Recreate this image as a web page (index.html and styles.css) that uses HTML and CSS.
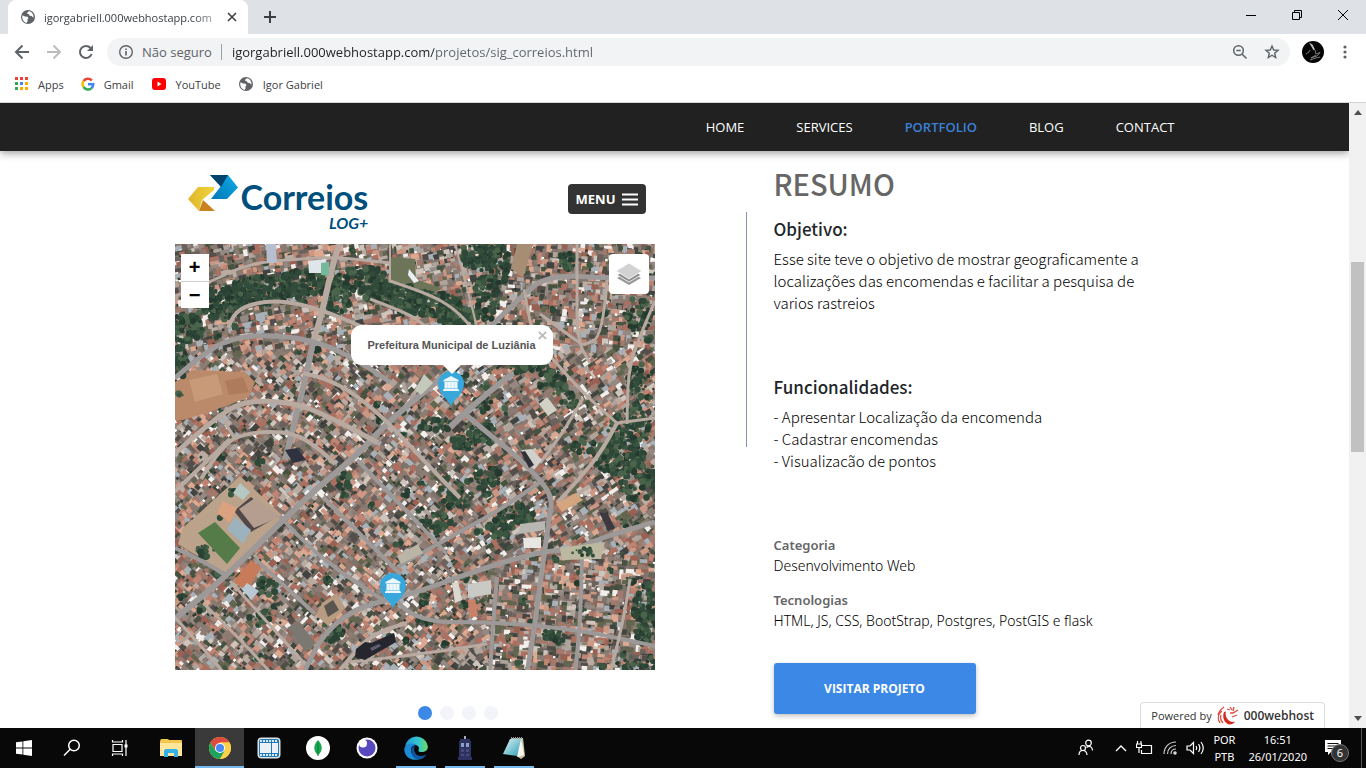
FILE: index.html
```html
<!DOCTYPE html>
<html lang="pt-BR">
<head>
<meta charset="utf-8">
<title>SIG Correios</title>
<link rel="stylesheet" href="styles.css">
</head>
<body>
<svg class="defs" width="0" height="0" aria-hidden="true">
  <defs>
    <symbol id="globe" viewBox="0 0 16 16"><circle cx="8" cy="8" r="7" fill="#5f6368"/><path d="M2.600 6.200 5 7.600l2.600 .2.8 1.600-1 1.200.2 2-1.200 1.400C3.800 13 2.200 10.800 2.200 8zM9 2.200 7.200 3.600 7.400 5 9 5.200l.6 1.600 2 .2 1.800 1.800c.6-3-1.200-6-4.400-6.600z" fill="#fff"/></symbol>
    <symbol id="pin" viewBox="0 0 28 36"><path d="M14 35C11 28 1 23 1 13a13 13 0 0 1 26 0c0 10-10 15-13 22z" fill="#37a7dc"/><path d="M14 5 6.500 9v1.500h15V9zM7.500 11h13v6h-13zM7 17.500h14v1h1V20H6v-1.500h1z" fill="#eef7fc"/><path d="M10.500 11.500V17M14 11.500V17M17.500 11.500V17" stroke="#b5dcf0" stroke-width=".6"/></symbol>
    <linearGradient id="gold" x1="0" x2="1"><stop offset="0" stop-color="#e0b52c"/><stop offset="1" stop-color="#f0d53a"/></linearGradient>
    <linearGradient id="sky" x1="0" y1="1" x2="1" y2="0"><stop offset="0" stop-color="#0077b6"/><stop offset="1" stop-color="#10abe8"/></linearGradient>
    <linearGradient id="edge" x1="0" y1="0" x2="1" y2="0"><stop offset="0" stop-color="#1f9bdc"/><stop offset=".6" stop-color="#35c6cf"/><stop offset="1" stop-color="#6bdc5c"/></linearGradient>
    <linearGradient id="paper" x1="0" y1="0" x2="1" y2="1"><stop offset="0" stop-color="#dff4f7"/><stop offset="1" stop-color="#2f9fb4"/></linearGradient>
  </defs>
</svg>

<header class="chrome">
  <div class="tabs">
    <div class="tab">
      <svg class="i16"><use href="#globe"/></svg>
      <span class="tab-title">igorgabriell.000webhostapp.com</span>
      <button class="bare" aria-label="Fechar guia"><svg width="10" height="10" viewBox="0 0 10 10"><path d="M1 1l8 8M9 1 1 9" stroke="#3c4043" stroke-width="1.600"/></svg></button>
    </div>
    <button class="bare new-tab" aria-label="Nova guia"><svg width="12" height="12" viewBox="0 0 12 12"><path d="M6 0v12M0 6h12" stroke="#3c4043" stroke-width="2"/></svg></button>
    <div class="window-controls">
      <button class="bare" aria-label="Minimizar"><svg width="12" height="12"><path d="M1 6.500h10" stroke="#000"/></svg></button>
      <button class="bare" aria-label="Restaurar"><svg width="12" height="12" fill="none" stroke="#000"><path d="M1.500 3.500h7v7h-7zM3.500 3V1.500h7v7H9"/></svg></button>
      <button class="bare" aria-label="Fechar"><svg width="12" height="12"><path d="M1 1l10 10M11 1 1 11" stroke="#000"/></svg></button>
    </div>
  </div>
  <div class="toolbar">
    <button class="bare tool" aria-label="Voltar"><svg width="16" height="16" fill="none" stroke="#5f6368" stroke-width="2"><path d="M15 8H2M8.500 1.500 2 8l6.500 6.500"/></svg></button>
    <button class="bare tool" aria-label="Avançar"><svg width="16" height="16" fill="none" stroke="#babcbe" stroke-width="2"><path d="M1 8h13M7.500 1.500 14 8l-6.500 6.500"/></svg></button>
    <button class="bare tool" aria-label="Recarregar"><svg width="16" height="16"><path d="M13.600 10A6 6 0 1 1 12.500 4" fill="none" stroke="#5f6368" stroke-width="2"/><path d="M15 1v6H9z" fill="#5f6368"/></svg></button>
    <div class="address">
      <svg width="16" height="16"><circle cx="8" cy="8" r="6.300" fill="none" stroke="#5f6368" stroke-width="1.400"/><path d="M7.200 7h1.600v4.500H7.200zM7.200 4.400h1.600V6H7.200z" fill="#5f6368"/></svg>
      <span class="insecure">Não seguro</span>
      <input class="url" aria-label="Endereço" value="igorgabriell.000webhostapp.com/projetos/sig_correios.html">
      <button class="bare" aria-label="Zoom"><svg width="16" height="16" fill="none" stroke="#5f6368" stroke-width="1.500"><circle cx="6.500" cy="6.500" r="4.800"/><path d="M10 10l4.500 4.500M4.300 6.500h4.400"/></svg></button>
      <button class="bare star" aria-label="Favoritar"><svg width="16" height="16" fill="none" stroke="#5f6368" stroke-width="1.400"><path d="M8 2l1.700 4 4.300.4-3.300 2.800 1 4.300L8 11.200l-3.700 2.300 1-4.300L2 6.400 6.300 6z"/></svg></button>
    </div>
    <button class="bare" aria-label="Perfil"><svg width="22" height="22"><circle cx="11" cy="11" r="11" fill="#050505"/><path d="M7 1.500l3.500 2 2.500 5-1.500.8z" fill="#bbb"/><path d="M13 9l1 4 4-1.500-3 3.500-6 2 5-3M4 13l3-2 1-2M8 19l6-2 4-1" fill="none" stroke="#888" stroke-width=".9"/></svg></button>
    <button class="bare more" aria-label="Menu do navegador"><svg width="4" height="16" fill="#5f6368"><circle cx="2" cy="3" r="1.600"/><circle cx="2" cy="8" r="1.600"/><circle cx="2" cy="13" r="1.600"/></svg></button>
  </div>
  <nav class="bookmarks" aria-label="Favoritos">
    <a href="#"><svg width="14" height="14"><g fill="#ea4335"><path d="M0 0h3v3H0zM5 0h3v3H5zM10 0h3v3h-3z"/></g><path d="M0 5h3v3H0zM0 10h3v3H0z" fill="#34a853"/><path d="M5 5h3v3H5z" fill="#4285f4"/><path d="M5 10h3v3H5zM10 5h3v3h-3zM10 10h3v3h-3z" fill="#f9ab00"/></svg>Apps</a>
    <a href="#"><svg width="14" height="14" fill="none" stroke-width="2.500"><path d="M2.600 4A5.200 5.200 0 0 1 10.800 3.400" stroke="#ea4335"/><path d="M2.600 4a5.200 5.200 0 0 0 0 6" stroke="#fbbc05"/><path d="M2.600 10a5.200 5.200 0 0 0 7.800 1.200" stroke="#34a853"/><path d="M10.400 11.200A5 5 0 0 0 12.200 7.200H7" stroke="#4285f4"/></svg>Gmail</a>
    <a href="#"><svg width="16" height="14"><rect x="1" y="1" width="14" height="12" rx="3" fill="#f00"/><path d="M6.500 4.500v5l4-2.500z" fill="#fff"/></svg>YouTube</a>
    <a href="#"><svg class="i16"><use href="#globe"/></svg>Igor Gabriel</a>
  </nav>
</header>

<div class="viewport">
  <div class="page">
    <nav class="site-nav" aria-label="Site">
      <ul class="container">
        <li><a href="#">HOME</a></li>
        <li><a href="#">SERVICES</a></li>
        <li><a href="#" class="active">PORTFOLIO</a></li>
        <li><a href="#">BLOG</a></li>
        <li><a href="#">CONTACT</a></li>
      </ul>
    </nav>
    <main class="container project">
      <section class="gallery" aria-label="Imagens do projeto">
        <div class="slide">
          <div class="slide-head">
            <div class="brand">
              <svg width="52" height="38" viewBox="0 0 52 38"><path d="M41 1l10 12.500L40 25H24l10-13-11-11z" fill="url(#sky)"/><path d="M23 1 34 13 41 1z" fill="#00456e"/><path d="M11 13h16v3L15 26l-3 11L1 25z" fill="url(#gold)"/><path d="M16 26 28 37H12z" fill="#c8821f"/></svg>
              <div class="brand-name">Correios<em>LOG+</em></div>
            </div>
            <button class="menu-btn">MENU<svg width="16" height="13"><path d="M0 1.500h16M0 6.500h16M0 11.500h16" stroke="#fff" stroke-width="1.800"/></svg></button>
          </div>
          <div class="map">
            <canvas id="satellite" width="480" height="426" role="img" aria-label="Imagem de satélite de Luziânia"></canvas>
            <div class="zoom"><button aria-label="Aproximar">+</button><button aria-label="Afastar">−</button></div>
            <button class="layers" aria-label="Camadas"><svg width="26" height="26"><path d="M13 10 25 17 13 24 1 17z" fill="#999"/><path d="M13 7 25 14 13 21 1 14z" fill="#8c8c8c" stroke="#fff" stroke-width=".8"/><path d="M13 2 26 10 13 18 0 10z" fill="#d2d2d2" stroke="#fff" stroke-width=".8"/></svg></button>
            <svg class="marker marker-a"><use href="#pin"/></svg>
            <svg class="marker marker-b"><use href="#pin"/></svg>
            <div class="popup">Prefeitura Municipal de Luziânia<button class="popup-close" aria-label="Fechar">×</button></div>
          </div>
        </div>
        <div class="dots">
          <button class="dot on" aria-label="Slide 1"></button><button class="dot" aria-label="Slide 2"></button><button class="dot" aria-label="Slide 3"></button><button class="dot" aria-label="Slide 4"></button>
        </div>
      </section>
      <div class="rule"></div>
      <article class="summary">
        <h1>RESUMO</h1>
        <section class="block">
          <h2>Objetivo:</h2>
          <p>Esse site teve o objetivo de mostrar geograficamente a localizações das encomendas e facilitar a pesquisa de varios rastreios</p>
        </section>
        <section class="block">
          <h2>Funcionalidades:</h2>
          <p>- Apresentar Localização da encomenda<br>- Cadastrar encomendas<br>- Visualizacão de pontos</p>
        </section>
        <dl>
          <dt>Categoria</dt><dd>Desenvolvimento Web</dd>
          <dt>Tecnologias</dt><dd>HTML, JS, CSS, BootStrap, Postgres, PostGIS e flask</dd>
        </dl>
        <a class="visit" href="#">VISITAR PROJETO</a>
      </article>
    </main>
    <a class="powered" href="#">Powered by<svg width="22" height="20" viewBox="0 0 22 20"><path d="M7 6C5 11 7 17 12 18.500c3 0 5-1 6-3-3 1-6 0-8-3-1-2-2-4-1-7z" fill="#d7281d"/><path d="M5 5C0 9 1 14 3 17M7 1C4 3 2 5 1 9M10 3l3 1M13 1l2 3M17 1l-1 4M21 4l-5 3-3 0M20 9l-5 2M4 9c-1 3 0 6 2 8" fill="none" stroke="#e04a3f" stroke-width="1.300"/></svg><b>000webhost</b></a>
  </div>
  <div class="scrollbar" aria-hidden="true"><svg width="8" height="5"><path d="M0 5 4 0l4 5z" fill="#505050"/></svg><div class="thumb"></div><svg width="8" height="5"><path d="M0 0h8L4 5z" fill="#505050"/></svg></div>
</div>

<footer class="taskbar">
  <button class="system" aria-label="Iniciar"><svg width="16" height="16" fill="#fff"><path d="M0 2.300 6.500 1.400v6.200H0zM7.300 1.300 16 0v7.600H7.300zM0 8.400h6.500v6.200L0 13.700zM7.300 8.400H16V16l-8.700-1.300z"/></svg></button>
  <button class="system" aria-label="Pesquisar"><svg width="18" height="18" fill="none" stroke="#fff" stroke-width="1.500"><circle cx="11" cy="6.500" r="5.300"/><path d="M7.200 10.300 1 16.500"/></svg></button>
  <button class="system" aria-label="Visão de tarefas"><svg width="18" height="18" fill="none" stroke="#fff" stroke-width="1.200"><path d="M2 5.500h9v7H2zM1.500 1v2H11.500V1M1.500 17v-2H11.500v2M15 1v16"/><path d="M13.500 5.500h3v3h-3z" fill="#fff" stroke="none"/></svg></button>
  <div class="apps">
  <button aria-label="Explorador"><svg width="22" height="20"><path d="M0 3l1-2h7l1 1h12a1 1 0 0 1 1 1v15H0z" fill="#f3c74c"/><path d="M0 5h22v13H0z" fill="#ffe69a"/><path d="M4 19v-6.500l1.500-1.500h11l1.500 1.500V19h-4v-4H8v4z" fill="#35b1e8"/></svg></button>
  <button class="current" aria-label="Chrome"><svg width="24" height="24"><circle cx="12" cy="12" r="11" fill="#fbd04b"/><path d="M2.500 6.500A11 11 0 0 1 21.500 6.500H12L7.200 14.700z" fill="#de4b3e"/><path d="M2.500 6.500 7.200 14.700 16.800 14.700 12 23A11 11 0 0 1 2.500 6.500z" fill="#1da35b"/><path d="M21.500 6.500H12L16.800 14.700 12 23A11 11 0 0 0 21.500 6.500z" fill="#fbd04b"/><circle cx="12" cy="12" r="5" fill="#fff"/><circle cx="12" cy="12" r="4" fill="#4788f4"/></svg></button>
  <button aria-label="Vídeos"><svg width="24" height="22"><rect x=".5" y=".5" width="23" height="21" rx="4" fill="#dfe4e8"/><rect x="2" y="2" width="20" height="18" rx="2" fill="#2678b5"/><path d="M3 6h11v10H3zM15 6h6v10h-6z" fill="#eaf1f6"/><path d="M3 4h18M3 18h18" stroke="#d6ecf8" stroke-width="2" stroke-dasharray="2 1"/></svg></button>
  <button aria-label="MongoDB"><svg width="24" height="24"><circle cx="12" cy="12" r="12" fill="#fff"/><path d="M12 4c5 5 5 11 0 15-5-4-5-10 0-15z" fill="#19a84f"/><path d="M12 7v13" stroke="#0b7d37"/></svg></button>
  <button aria-label="Insomnia"><svg width="22" height="22"><circle cx="11" cy="11" r="10.500" fill="#fff"/><circle cx="11" cy="11" r="8.500" fill="#5849be"/><circle cx="7" cy="6.500" r="4" fill="#fff"/></svg></button>
  <button class="open" aria-label="Edge"><svg width="24" height="24"><path d="M1 11A11.500 11.500 0 0 1 23.800 10c.4 4-2.500 6-6 6-2.300 0-3.800-1-3.300-2 .8-1 .8-4-2.500-5C8 7.500 3 8 1 11z" fill="url(#edge)"/><path d="M.3 13C1 8 8 6 12 9c-4 0-6 4-4.500 8 1 3 4 5.500 8 6C8 26 0 20.500.3 13z" fill="#1a8bd4"/><path d="M12 9c-3 2-3 10 4 11 3 .3 5-1 6.500-1.500-1.500 3-5 5-8 5C6 22 5 11 12 9z" fill="#0d57a5"/></svg></button>
  <button class="open" aria-label="Tardis"><svg width="16" height="24"><path d="M2 5h12v17H2zM1 21h14v3H1zM3 3h10v2H3z" fill="#2d3260"/><path d="M7 0h2v3H7z" fill="#aab"/><path d="M4 7h3v4H4zM9 7h3v4H9z" fill="#8aa0c8"/><path d="M4 13h3v3H4zM9 13h3v3H9zM4 18h3v2H4zM9 18h3v2H9z" fill="#454b80"/></svg></button>
  <button class="open" aria-label="Bloco de notas"><svg width="24" height="22"><path d="M9 1h12l2 18-4 3-3-2z" fill="#c9c5a8"/><path d="M19 1l3 17-7 2z" fill="#f6f6f2"/><path d="M8 2h11l-4 17-14-2z" fill="url(#paper)"/><path d="M9 1h12" stroke="#999" stroke-width="2" stroke-dasharray="1 1"/></svg></button>
  </div>
  <div class="tray">
    <svg width="16" height="18" fill="none" stroke="#fff" stroke-width="1.200"><circle cx="10.500" cy="4" r="2.800"/><circle cx="5" cy="9" r="2.500"/><path d="M1 16c0-6 7.500-6 8 0M8.500 8.500c3-2.500 6-.5 6 3"/></svg>
    <svg width="12" height="8" fill="none" stroke="#fff" stroke-width="1.400"><path d="M1 7l5-5 5 5"/></svg>
    <svg width="18" height="14" fill="none" stroke="#fff" stroke-width="1.200"><path d="M6 4.500h9.500v8h-10V9M1.500 0v3M5 0v3M.5 3h5v3.500h-5zM3 6.500V12"/></svg>
    <svg width="14" height="14" fill="none" stroke="#ccc" stroke-width="1.200"><path d="M1 13C1 6 6 1 13 1M4.500 13C4.500 8 8 4.500 13 4.500M8 13c0-3 2-5 5-5"/><circle cx="12" cy="12" r="1.200" fill="#fff"/></svg>
    <svg width="18" height="14" fill="none" stroke="#fff" stroke-width="1.200"><path d="M1 5h3l3.500-3.500v11L4 9H1zM10 5c1 1.500 1 2.500 0 4M12.500 3c2 3 2 5 0 8M15 1c3 4 3 8 0 12"/></svg>
    <div class="stack">POR<br>PTB</div>
    <div class="stack clock">16:51<br>26/01/2020</div>
    <div class="notices"><svg width="18" height="18"><path d="M1 1h16v12H7l-3 3v-3H1z" fill="#fff"/><path d="M3.500 4.500h11M3.500 7h11M3.500 9.500h7" stroke="#111" stroke-width="1.200"/></svg><span class="count">6</span></div>
  </div>
</footer>
<script src="map.js"></script>
</body>
</html>
```

FILE: styles.css
```css
* { box-sizing: border-box; }
body { margin: 0; height: 100vh; display: flex; flex-direction: column; overflow: hidden; background: #fff; color: #212529; font-family: "Noto Sans", "Open Sans", sans-serif; font-size: 12px; }
a { color: inherit; text-decoration: none; }
svg { display: block; flex: none; }
button, input { font: inherit; border: 0; padding: 0; margin: 0; background: none; color: inherit; }
.defs { position: absolute; }
.bare { display: flex; align-items: center; justify-content: center; }
.i16 { width: 16px; height: 16px; }

.chrome { border-bottom: 1px solid #d3d5d8; color: #3c4043; font-family: "Open Sans", sans-serif; }
.tabs { height: 34px; background: #dee1e6; display: flex; padding-left: 8px; }
.tab { width: 240px; background: #fff; border-radius: 8px 8px 0 0; display: flex; align-items: center; gap: 8px; padding: 0 11px 0 12px; }
.tab-title { flex: 1; white-space: nowrap; font-size: 11px; mask-image: linear-gradient(to right, #000 85%, rgba(0, 0, 0, .3)); }
.new-tab { padding: 0 16px; }
.window-controls { margin-left: auto; display: flex; }
.window-controls button { width: 46px; height: 29px; }
.toolbar { height: 36px; display: flex; align-items: center; padding: 0 19px 0 6px; }
.tool { width: 32px; }
.address { flex: 1; height: 28px; margin: 0 12px 0 5px; border-radius: 14px; background: #f1f3f4; display: flex; align-items: center; padding: 0 10px 0 11px; font-size: 13px; }
.insecure { color: #5f6368; padding: 0 9px 0 8px; margin-right: 10px; border-right: 1px solid #9aa0a6; line-height: 16px; }
.url { flex: 1; background: linear-gradient(to right, #202124 202px, #5f6368 202px); background-clip: text; -webkit-background-clip: text; color: transparent; }
.star { margin-left: 16px; }
.more { margin-left: 19px; }
.bookmarks { height: 32px; display: flex; align-items: center; gap: 17px; padding: 0 15px 4px; font-size: 11px; }
.bookmarks a { display: flex; align-items: center; gap: 9px; }

.viewport { flex: 1; min-height: 0; display: flex; }
.page { flex: 1; position: relative; overflow: hidden; }
.scrollbar { width: 17px; background: #f1f1f1; display: flex; flex-direction: column; align-items: center; padding: 7px 0; }
.thumb { width: 13px; height: 190px; margin: 147px 0 auto; background: #c1c1c1; }
.container { width: 1000px; max-width: 100%; margin: 0 auto; }

.site-nav { background: #212121; box-shadow: 0 2px 8px rgba(0, 0, 0, .4); color: #fff; position: relative; }
.site-nav ul { display: flex; justify-content: flex-end; gap: 52px; padding: 0; list-style: none; font: 500 13px/48px "Open Sans", sans-serif; }
.site-nav .active { color: #3b80d8; font-weight: 600; }

.project { display: flex; }
.gallery { width: 566px; margin-right: 5px; }
.slide { width: 480px; max-width: 100%; }
.slide-head { height: 93px; display: flex; align-items: center; justify-content: space-between; padding: 3px 9px 0 12px; }
.brand { display: flex; gap: 2px; padding-top: 4px; color: #004f7c; }
.brand svg { margin-top: 1px; }
.brand-name { font: 700 34px/48px Lato, sans-serif; display: flex; flex-direction: column; padding-bottom: 4px; }
.brand-name em { align-self: flex-end; font: italic 700 16px/4px Lato, sans-serif; }
.menu-btn { display: flex; align-items: center; gap: 6px; height: 30px; padding: 0 8px; border-radius: 4px; background: #333; color: #fff; font: 700 13px/30px "Open Sans", sans-serif; }
.map { position: relative; }
.map canvas { display: block; width: 100%; }
.zoom { position: absolute; left: 6px; top: 10px; width: 28px; background: #fff; }
.zoom button { display: block; width: 100%; height: 27px; font: 700 20px/27px "Liberation Sans", sans-serif; color: #000; }
.zoom button + button { border-top: 1px solid #ccc; }
.layers { position: absolute; right: 6px; top: 10px; width: 40px; height: 40px; border-radius: 4px; background: #fff; display: flex; align-items: center; justify-content: center; }
.marker { position: absolute; width: 28px; height: 36px; }
.marker-a { left: 262px; top: 127px; }
.marker-b { left: 204px; top: 329px; }
.popup { position: absolute; left: 176px; top: 81px; width: 202px; height: 40px; border-radius: 11px; background: #fff; color: #555; text-align: center; white-space: nowrap; font: 700 11px/40px "Liberation Sans", sans-serif; }
.popup::after { content: ""; position: absolute; left: 92px; top: 100%; border: 9px solid transparent; border-top-color: #fff; border-bottom: 0; }
.popup-close { position: absolute; right: 5px; top: 1px; font: 700 17px/20px "Liberation Sans", sans-serif; color: #bbb; }
.dots { display: flex; justify-content: center; gap: 8px; margin-top: 36px; }
.dot { width: 14px; height: 14px; border-radius: 50%; background: #f2f4f9; }
.dot.on { background: #3c88e6; }

.rule { width: 1px; height: 235px; margin: 61px 27px 0 0; background: #8791b5; }
.summary { flex: 1; font-family: "Noto Sans CJK SC", sans-serif; }
.summary h1 { margin: 10px 0 13px; font-size: 29px; line-height: 44px; font-weight: 500; color: #666; }
.summary h2 { margin: 0 0 8px; font-size: 17px; line-height: 22px; font-weight: 500; }
.summary p { margin: 0; font-size: 15px; line-height: 22px; font-weight: 300; color: #000; }
.block { min-height: 158px; }
.summary dl { margin: 0; padding-top: 1px; font: 14px/20px "Noto Sans", sans-serif; }
.summary dt { font-size: 13px; font-weight: 600; color: #666; }
.summary dd { margin: 0 0 13px; line-height: 22px; font-weight: 300; color: #000; }
.visit { display: block; width: 202px; margin-top: 31px; border-radius: 3px; background: #3c88e6; color: #fff; text-align: center; font: 700 12px/51px "Open Sans", sans-serif; box-shadow: 0 2px 5px rgba(0, 0, 0, .25); }
.powered { position: absolute; right: 24px; bottom: 0; height: 26px; border: 1px solid #ddd; border-bottom: 0; border-radius: 4px 4px 0 0; padding: 0 10px; background: #fff; color: #333; display: flex; align-items: center; gap: 5px; font: 11px/24px "Open Sans", sans-serif; }
.powered b { font-size: 12px; font-weight: 600; }

.taskbar { height: 40px; background: #080808; color: #fff; display: flex; }
.taskbar button { width: 49px; height: 40px; display: flex; align-items: center; justify-content: center; }
.taskbar .system { width: 48px; }
.apps { display: flex; margin-left: 2px; }
.taskbar .open { background: linear-gradient(#76b9ed, #76b9ed) bottom / 40px 2px no-repeat; }
.taskbar .current { background: linear-gradient(#76b9ed, #76b9ed) bottom / 100% 2px no-repeat #3a3a3a; }
.tray { margin-left: auto; display: flex; align-items: center; gap: 9px; padding-right: 19px; margin-right: 4px; border-right: 1px solid #555; }
.tray > svg:first-child { margin-right: 12px; }
.stack { text-align: center; font: 11px/17px "Noto Sans", sans-serif; }
.clock { margin-left: 4px; }
.notices { position: relative; margin-left: 8px; }
.count { position: absolute; left: 7px; top: 5px; width: 18px; height: 18px; border: 1px solid #777; border-radius: 50%; background: #333; text-align: center; font: 11px/16px "Noto Sans", sans-serif; }
```

FILE: map.js
```javascript
const canvas = document.getElementById("satellite");
const ctx = canvas.getContext("2d");
let seed = 77;
function rnd() {
  seed = (seed * 1664525 + 1013904223) >>> 0;
  return seed / 4294967296;
}
const pick = list => list[Math.floor(rnd() * list.length)];

function polygon(points, fill) {
  ctx.beginPath();
  points.forEach(([x, y]) => ctx.lineTo(x, y));
  ctx.closePath();
  ctx.fillStyle = fill;
  ctx.fill();
}

function road(width, color, ...p) {
  ctx.beginPath();
  ctx.moveTo(p[0][0], p[0][1]);
  for (let i = 1; i < p.length - 1; i++) {
    ctx.quadraticCurveTo(p[i][0], p[i][1], (p[i][0] + p[i + 1][0]) / 2, (p[i][1] + p[i + 1][1]) / 2);
  }
  ctx.lineTo(p[p.length - 1][0], p[p.length - 1][1]);
  ctx.lineWidth = width;
  ctx.strokeStyle = color;
  ctx.stroke();
}

// Trees are scattered in an ellipse around each centre.
function trees(cx, cy, rx, ry, count) {
  for (let i = 0; i < count; i++) {
    const a = rnd() * Math.PI * 2, r = Math.sqrt(rnd());
    ctx.beginPath();
    ctx.arc(cx + Math.cos(a) * r * rx, cy + Math.sin(a) * r * ry, 1 + rnd() * 2.5, 0, 7);
    ctx.fillStyle = pick(["#2a4235", "#314c3a", "#243a2e", "#3a5640", "#2e4838", "#4a634b"]);
    ctx.fill();
  }
}

ctx.fillStyle = "#7f746b";
ctx.fillRect(0, 0, 480, 426);

const roofs = ["#c08472", "#cc9783", "#ad6f5f", "#dca890", "#9a6153", "#958a83", "#aea49b", "#6c625d", "#544e4b", "#d0c5bd", "#f2eeec", "#62664f", "#465240", "#8a7b72", "#baaca2", "#40433f", "#a4796c", "#a8b0b8", "#8d7c73"];
for (let y = 0; y < 430; y += 5) {
  for (let x = 0; x < 484; x += 5) {
    const steep = x > 310 && (y < 110 || y > 310);
    const angle = steep ? 0.08 : x > 300 ? -0.6 : y < 110 ? -0.2 : 0.75;
    ctx.save();
    ctx.translate(x + rnd() * 5 - 2, y + rnd() * 5 - 2);
    ctx.rotate(angle + (rnd() < 0.3 ? 1.57 : 0));
    ctx.fillStyle = pick(roofs);
    ctx.fillRect(-3, -3, 4 + rnd() * 6, 3 + rnd() * 4);
    if (rnd() < 0.25) {
      ctx.fillStyle = pick(["#363a35", "#ffffff", "#2d3a2e"]);
      ctx.fillRect(1, 1, 2.5, 2.5);
    }
    ctx.restore();
  }
}

// Open ground
polygon([[0, 138], [18, 126], [70, 128], [80, 138], [74, 153], [40, 166], [8, 176], [0, 176]], "#bb8a6b");
polygon([[14, 136], [42, 130], [48, 150], [20, 158]], "#c89a78");
polygon([[50, 137], [68, 133], [74, 148], [54, 151]], "#ae7b5d");
polygon([[215, 13], [240, 15], [241, 35], [268, 45], [252, 50], [215, 37]], "#6d7558");
polygon([[342, 0], [358, 0], [348, 34], [336, 24]], "#a68d74");
polygon([[65, 232], [109, 273], [54, 331], [3, 300], [8, 284]], "#bba28b");

// Vegetation
[[45, 60, 26, 16, 160], [85, 47, 35, 15, 240], [128, 40, 25, 14, 160], [162, 53, 13, 20, 110],
 [190, 35, 22, 14, 120], [222, 51, 32, 11, 180], [255, 60, 30, 12, 170], [284, 75, 20, 12, 110],
 [10, 84, 18, 15, 110], [4, 117, 10, 16, 55], [303, 12, 17, 16, 110], [325, 20, 10, 25, 80],
 [312, 53, 13, 24, 90], [393, 17, 10, 9, 35], [463, 72, 15, 18, 55], [352, 122, 18, 9, 65],
 [378, 138, 14, 14, 55], [395, 156, 10, 8, 25], [462, 140, 10, 23, 50], [455, 184, 22, 19, 100],
 [445, 213, 26, 18, 140], [463, 236, 20, 20, 100], [470, 371, 12, 32, 105], [466, 420, 26, 9, 50],
 [308, 160, 9, 8, 28], [307, 190, 15, 11, 55], [290, 199, 14, 7, 35], [281, 248, 17, 17, 50],
 [310, 234, 16, 12, 50], [340, 271, 18, 13, 60], [324, 285, 13, 9, 35], [92, 342, 10, 9, 30],
 [170, 240, 8, 14, 24], [260, 279, 16, 10, 38], [378, 393, 13, 8, 25], [260, 180, 18, 7, 28],
 [408, 202, 12, 9, 28], [85, 373, 12, 9, 20], [161, 389, 7, 7, 30], [28, 308, 6, 7, 26]
].forEach(t => trees(...t));
for (let i = 0; i < 110; i++) trees(rnd() * 480, rnd() * 426, 4, 3, 4);

const grey = "#9d9998", tan = "#b8aaa1";
road(6, tan, [165, 0], [160, 10], [147, 69], [138, 98]);
road(6, grey, [138, 98], [132, 129], [119, 180], [110, 216]);
road(5, grey, [480, 34], [435, 34], [372, 31], [345, 54], [315, 83], [295, 106]);
road(6, grey, [338, 129], [305, 155], [275, 183]);
road(6, grey, [275, 127], [215, 175], [188, 206], [128, 256], [55, 329], [-5, 379]);
road(3, tan, [0, 52], [35, 38], [75, 19], [125, 15], [160, 13], [215, 19]);
road(4, tan, [53, 84], [58, 70], [75, 60], [105, 56], [145, 65], [190, 84], [240, 105]);
road(3, tan, [195, 55], [235, 70], [250, 82]);
road(3, tan, [215, 37], [252, 49], [280, 65], [298, 85]);
road(2, tan, [215, 0], [215, 38]);
road(5, grey, [0, 134], [32, 106], [62, 93], [100, 91], [145, 98], [185, 118], [215, 138]);
road(5, tan, [-5, 214], [45, 169], [75, 156], [122, 159], [165, 178], [203, 199]);
road(4, tan, [128, 129], [150, 134], [180, 150], [213, 178], [250, 218], [285, 254]);
road(4, tan, [26, 235], [48, 199], [75, 188], [118, 188], [143, 204], [160, 220]);
road(3, tan, [45, 170], [60, 195]);
road(2, tan, [280, 0], [291, 40], [302, 83]);
road(3, tan, [402, 0], [402, 40], [402, 96], [415, 119]);
road(3, tan, [432, 36], [428, 93], [408, 101]);
road(3, tan, [365, 70], [395, 92], [408, 101]);
road(3, tan, [350, 48], [353, 75], [365, 100], [382, 120], [408, 149], [442, 179]);
road(4, tan, [442, 179], [428, 206], [404, 235], [382, 259]);
road(3, tan, [480, 57], [462, 98], [453, 130], [452, 180]);
road(3, tan, [442, 179], [480, 174]);
road(3, tan, [408, 154], [392, 183], [365, 219]);
road(5, grey, [290, 170], [320, 195], [345, 215], [378, 250], [374, 275], [368, 319], [360, 379], [352, 430]);
road(5, grey, [480, 278], [428, 293], [400, 306], [368, 307], [312, 323], [228, 353], [182, 363], [148, 390], [130, 426]);
road(4, grey, [368, 236], [330, 263], [288, 286], [222, 323]);
road(4, grey, [182, 216], [225, 260], [272, 310]);
road(4, grey, [148, 253], [185, 290], [226, 331]);
road(4, grey, [105, 272], [130, 300], [168, 330], [208, 356]);
road(4, grey, [80, 315], [110, 342], [140, 370]);
road(4, grey, [218, 350], [232, 378], [322, 378], [405, 386], [480, 402]);
road(4, tan, [232, 379], [200, 388], [180, 408], [165, 426]);
road(3, tan, [175, 418], [240, 411], [312, 400]);
road(4, grey, [322, 333], [318, 380], [315, 430]);
road(4, grey, [407, 313], [406, 370], [400, 430]);
road(3, tan, [455, 335], [450, 370], [435, 430]);
road(3, tan, [28, 359], [60, 390], [97, 430]);
road(3, tan, [-5, 368], [20, 395], [50, 430]);
road(3, tan, [55, 337], [85, 370], [130, 420]);
road(4, grey, [0, 304], [30, 318], [53, 333]);
road(4, tan, [-5, 252], [30, 219], [55, 195]);

// Landmarks
polygon([[40, 278], [65, 304], [52, 320], [23, 289]], "#547b48");
polygon([[76, 253], [102, 273], [76, 288], [59, 267]], "#514748");
polygon([[80, 254], [105, 273], [79, 284], [64, 265]], "#b59d90");
polygon([[48, 257], [62, 264], [55, 279], [42, 269]], "#dca17e");
polygon([[65, 239], [75, 248], [68, 256], [58, 249]], "#b6c8c4");
polygon([[60, 273], [76, 286], [68, 300], [52, 285]], "#9cb2bc");
polygon([[58, 338], [73, 347], [86, 323], [76, 316]], "#c77b58");
polygon([[72, 339], [84, 347], [76, 356], [67, 345]], "#b9c8d2");
polygon([[133, 17], [151, 15], [152, 29], [134, 29]], "#dfe5e9");
polygon([[146, 19], [154, 18], [154, 32], [146, 31]], "#75b89c");
polygon([[91, 0], [101, 0], [102, 19], [92, 19]], "#b7bed0");
polygon([[234, 25], [244, 37], [239, 39], [233, 31]], "#eceef2");
polygon([[240, 146], [249, 130], [258, 139], [246, 151]], "#c5c9bc");
polygon([[147, 359], [162, 349], [170, 364], [153, 382], [141, 371]], "#b79c82");
polygon([[149, 362], [158, 356], [164, 366], [153, 373]], "#5b5552");
polygon([[181, 405], [190, 398], [196, 399], [219, 389], [221, 398], [190, 416], [180, 413]], "#25262e");
polygon([[195, 404], [204, 400], [206, 402], [197, 407]], "#5d6070");
polygon([[222, 312], [243, 300], [248, 309], [226, 320]], "#bbb5a8");
polygon([[348, 294], [366, 293], [366, 304], [349, 304]], "#e8e6e2");
polygon([[345, 280], [370, 277], [370, 286], [344, 290]], "#b8b7b2");
polygon([[385, 304], [430, 298], [426, 315], [387, 316]], "#bdb9a0");
trees(410, 308, 13, 5, 12);
polygon([[346, 206], [357, 205], [367, 216], [359, 226]], "#d2d0cc");
polygon([[346, 208], [350, 207], [359, 221], [354, 224]], "#303139");
polygon([[277, 339], [283, 337], [287, 356], [280, 359]], "#dcd8d0");
polygon([[293, 340], [316, 336], [316, 350], [293, 354]], "#c9cac5");
polygon([[293, 356], [300, 355], [303, 372], [294, 374]], "#c98268");
polygon([[381, 260], [400, 249], [408, 256], [387, 268]], "#d4a57f");
polygon([[424, 268], [433, 270], [440, 284], [433, 287]], "#3e3840");
polygon([[112, 384], [123, 377], [141, 399], [131, 408]], "#7b7771");
polygon([[110, 206], [122, 204], [131, 216], [118, 219]], "#30333f");
polygon([[364, 160], [372, 153], [382, 166], [373, 172]], "#d3d0c6");

// One soft pass blends the hard edges of the shapes.
const copy = document.createElement("canvas");
copy.width = canvas.width;
copy.height = canvas.height;
copy.getContext("2d").drawImage(canvas, 0, 0);
ctx.filter = "blur(0.5px)";
ctx.drawImage(copy, 0, 0);
```
